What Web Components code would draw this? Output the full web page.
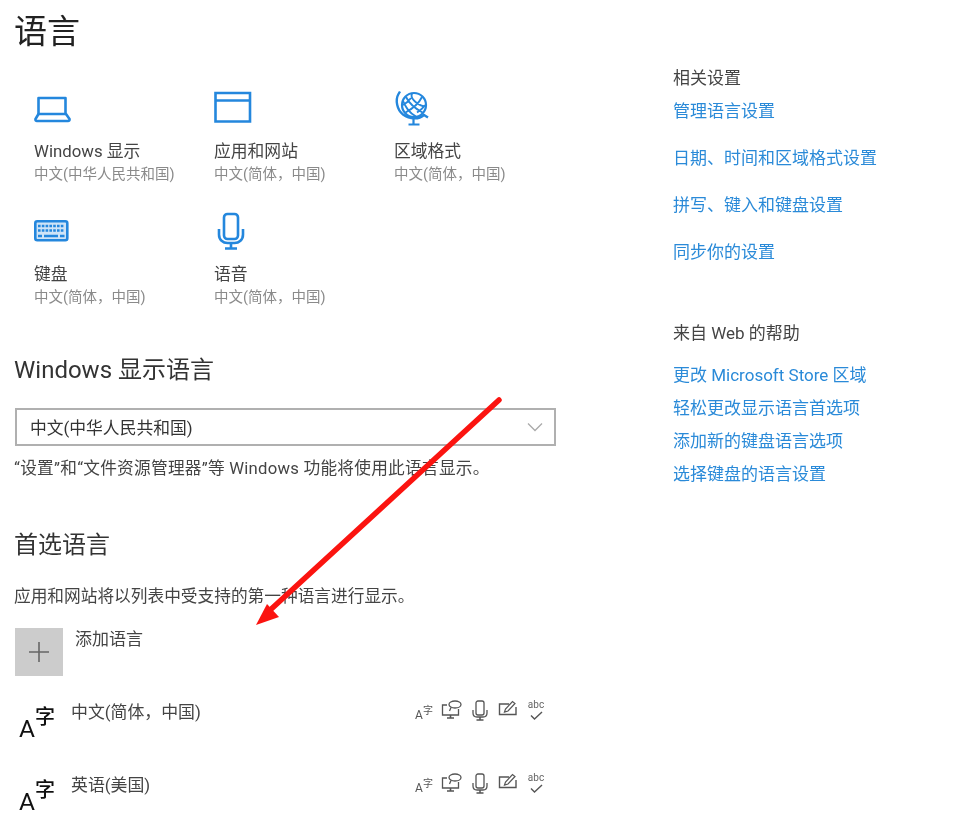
<!DOCTYPE html>
<html lang="zh-CN"><head><meta charset="utf-8"><title>语言</title>
<style>
html,body{margin:0;padding:0;background:#fff;height:821px;overflow:hidden}
body{font-family:Roboto,"Noto Sans CJK SC",sans-serif;color:#333}
</style></head><body>
<language-page>
  <page-title>语言</page-title>
  <tile-grid>
    <settings-tile label="Windows 显示" sub="中文(中华人民共和国)"><svg width="38" height="40" viewBox="0 0 38 40" fill="none" stroke="#2487dd" stroke-width="2.600" stroke-linejoin="round" stroke-linecap="round"><path d="M4.500 26V10h27v16z"/><path d="M4.500 26 1.500 31q-.3 2 1.500 2h31q1.800 0 1.500-2L32 26"/></svg></settings-tile>
    <settings-tile label="应用和网站" sub="中文(简体，中国)"><svg width="38" height="40" viewBox="0 0 38 40" fill="none" stroke="#2487dd" stroke-width="2.600"><path d="M1.500 5h34.500v28.500H1.500zM1.500 12.500h34.500"/></svg></settings-tile>
    <settings-tile label="区域格式" sub="中文(简体，中国)"><svg width="38" height="40" viewBox="0 0 38 40" fill="none" stroke="#2487dd" stroke-width="2.200"><circle cx="20" cy="17" r="12"/><path d="M6 3.500 4.500 6C1 12 3 22 9 26.500c7 5 16 5 21 .5l4 2.500" stroke-width="2.400"/><path d="M19.500 30v6M14.500 36.500h11" stroke-width="2.200"/><path d="M12 9c3 6 10 12 16.500 15.500M28 9c-3 6-10 12-16.500 15.500M9 17c3-1.500 5-3 8-7M23 24.500c3-2 6-4 8-7.500M18 5.500c-2 4 3 10 12 13M9 13c3 6 5 11 13 15.500" stroke-width="1.900"/></svg></settings-tile>
    <settings-tile label="键盘" sub="中文(简体，中国)"><svg width="38" height="40" viewBox="0 0 38 40" fill="none" stroke="#2487dd"><rect x="1.300" y="10.300" width="32" height="19" rx="2" stroke-width="2.600" fill="#cfe4f7"/><path d="M4 15h26.500M4 19.500h26.500" stroke-width="2.400" stroke-dasharray="2.600 1.200"/><path d="M4 25h4M10 25h14M26 25h4.500" stroke-width="2.400"/></svg></settings-tile>
    <settings-tile label="语音" sub="中文(简体，中国)"><svg width="38" height="40" viewBox="0 0 38 40" fill="none" stroke="#2487dd" stroke-width="2.600"><rect x="10" y="3" width="14" height="25" rx="3.500"/><path d="M5 18v5.500c0 5.500 4 8.500 8.500 8.500h7c4.500 0 8.500-3 8.500-8.500V18"/><path d="M17 32v5M11 37.500h12"/></svg></settings-tile>
  </tile-grid>
  <section-heading style="margin-top:47px">Windows 显示语言</section-heading>
  <select-box style="margin-top:23px">中文(中华人民共和国)</select-box>
  <body-note style="margin-top:12px;letter-spacing:.24px">“设置”和“文件资源管理器”等 Windows 功能将使用此语言显示。</body-note>
  <section-heading style="margin-top:50px">首选语言</section-heading>
  <body-note style="margin-top:26px">应用和网站将以列表中受支持的第一种语言进行显示。</body-note>
  <add-language style="margin-top:20px">添加语言</add-language>
  <language-row style="margin-top:24px">中文(简体，中国)</language-row>
  <language-row>英语(美国)</language-row>
  <side-column slot="side">
    <side-heading>相关设置</side-heading>
    <link-list style="margin-top:5px;--gap:19px">
      <side-link>管理语言设置</side-link><side-link>日期、时间和区域格式设置</side-link><side-link>拼写、键入和键盘设置</side-link><side-link>同步你的设置</side-link>
    </link-list>
    <side-heading style="margin-top:53px">来自 Web 的帮助</side-heading>
    <link-list style="margin-top:14px;--gap:5px">
      <side-link>更改 Microsoft Store 区域</side-link><side-link>轻松更改显示语言首选项</side-link><side-link>添加新的键盘语言选项</side-link><side-link>选择键盘的语言设置</side-link>
    </link-list>
  </side-column>
</language-page>
<script>
const def=(name,html)=>customElements.define(name,class extends HTMLElement{
  constructor(){super();this.attachShadow({mode:"open"});}
  connectedCallback(){this.shadowRoot.innerHTML=typeof html==="function"?html(this):html;}
});
def("language-page",`<style>
:host{display:block;position:relative;width:976px;height:821px;overflow:hidden;filter:blur(.5px)}
.wrap{display:flex}
.main{width:542px;margin-left:14px;padding-top:10px;flex:none}
.side{margin-left:117px;padding-top:64px}
svg{position:absolute;left:0;top:0;pointer-events:none}
</style><div class="wrap"><div class="main"><slot></slot></div><div class="side"><slot name="side"></slot></div></div>
<svg width="976" height="821" viewBox="0 0 976 821"><path d="M499 400 268 612" stroke="#fb1410" stroke-width="5.500" stroke-linecap="round" fill="none"/><path d="M256 625 267 604 279 617z" fill="#fb1410"/></svg>`);
def("page-title",`<style>:host{display:block;font-size:33px;line-height:44px;color:#222}</style><slot></slot>`);
def("tile-grid",`<style>:host{display:grid;grid-template-columns:repeat(3,180px);row-gap:26px;margin:34px 0 0 20px}</style><slot></slot>`);
def("settings-tile",e=>`<style>
:host{display:block;height:97px;white-space:nowrap}
.icon{height:52px;display:flex;align-items:flex-start}
.l{font-size:16.800px;line-height:22px;color:#444}
.s{font-size:14.500px;line-height:22px;margin-top:2px;color:#8a8a8a}
</style><div class="icon"><slot></slot></div><div class="l">${e.getAttribute("label")}</div><div class="s">${e.getAttribute("sub")}</div>`);
def("section-heading",`<style>:host{display:block;font-size:24px;line-height:30px;color:#333;white-space:nowrap}</style><slot></slot>`);
def("select-box",`<style>
:host{display:flex;align-items:center;justify-content:space-between;box-sizing:border-box;height:38px;margin-left:1px;border:2px solid #b0b0b0;padding:0 11px 0 13px;font-size:16.800px;color:#333}
</style><span><slot></slot></span><svg width="16" height="10" viewBox="0 0 16 10" fill="none" stroke="#aaa" stroke-width="1.300"><path d="M1 1.500l7 7 7-7"/></svg>`);
def("body-note",`<style>:host{display:block;font-size:16.700px;line-height:22px;color:#444;white-space:nowrap}</style><slot></slot>`);
def("add-language",`<style>
:host{display:flex;height:48px;margin-left:1px}
.b{width:48px;height:48px;background:#ccc;display:flex;align-items:center;justify-content:center}
.t{margin-left:12px;font-size:17px;line-height:22px;color:#444}
</style><div class="b"><svg width="20" height="20" viewBox="0 0 20 20" stroke="#666" stroke-width="1.600"><path d="M10 0v20M0 10h20"/></svg></div><div class="t"><slot></slot></div>`);
const smallIcons=`<div class="ics">
<div class="ic az"><b>A</b><i>字</i></div>
<div class="ic"><svg width="22" height="20" viewBox="0 0 22 20" fill="none" stroke="#555" stroke-width="1.300"><path d="M6 5H1.500v10h16V9"/><ellipse cx="14" cy="4.500" rx="6" ry="3.500"/><path d="M10 7.500 8.500 11"/><path d="M9.500 15v2.500M6 18h7" stroke-width="1.600"/></svg></div>
<div class="ic"><svg width="16" height="21" viewBox="0 0 16 21" fill="none" stroke="#555" stroke-width="1.300"><rect x="4" y="1" width="8" height="14" rx="2"/><path d="M1 10v3q0 4 4 4h6q4 0 4-4v-3"/><path d="M8 17v3M4.500 20h7" stroke-width="1.500"/></svg></div>
<div class="ic"><svg width="20" height="17" viewBox="0 0 20 17" fill="none" stroke="#555" stroke-width="1.400"><path d="M11 4H1.500v10.500h16.500V7"/><path d="M6.500 12l1-3 7-7.500 2.500 2-7 7.500z" stroke-width="1.200"/></svg></div>
<div class="ic ab"><span>abc</span><svg width="13" height="9" viewBox="0 0 13 9" fill="none" stroke="#555" stroke-width="1.400"><path d="M1 4.500 4.500 8 12 1"/></svg></div>
</div>`;
def("language-row",`<style>
:host{display:flex;height:73px;color:#444}
.a{width:56px;margin-left:5px;display:flex;align-items:flex-start;color:#111;flex:none}
.a b{font-weight:400;font-size:24.500px;line-height:30px;margin-top:14px}
.a i{font-style:normal;font-size:20px;line-height:26px;margin:3px 0 0 0;font-weight:500;font-family:"Noto Sans CJK SC",sans-serif}
.t{flex:1;font-size:16.900px;line-height:22px;padding-top:1px;margin-left:-4px}
.ics{display:flex;width:140px;height:22px;margin-right:6px;align-items:flex-start}
.ic{width:28px;height:22px;display:flex;flex-direction:column;align-items:center;justify-content:flex-start;color:#555}
.az{flex-direction:row;justify-content:center}
.az b{font-weight:400;font-size:12px;line-height:14px;margin-top:7px}
.az i{font-style:normal;font-size:10px;line-height:12px}
.ab span{font-size:10px;line-height:10px;margin-bottom:1px;color:#666}
</style><div class="a"><b>A</b><i>字</i></div><div class="t"><slot></slot></div>${smallIcons}`);
def("side-column",`<style>:host{display:block}</style><slot></slot>`);
def("side-heading",`<style>:host{display:block;font-size:17px;line-height:28px;color:#444;white-space:nowrap}</style><slot></slot>`);
def("link-list",`<style>:host{display:flex;flex-direction:column;gap:var(--gap)}</style><slot></slot>`);
def("side-link",`<style>:host{display:block;font-size:17px;line-height:28px;color:#2a8ad8;white-space:nowrap}</style><slot></slot>`);
</script>
</body></html>
